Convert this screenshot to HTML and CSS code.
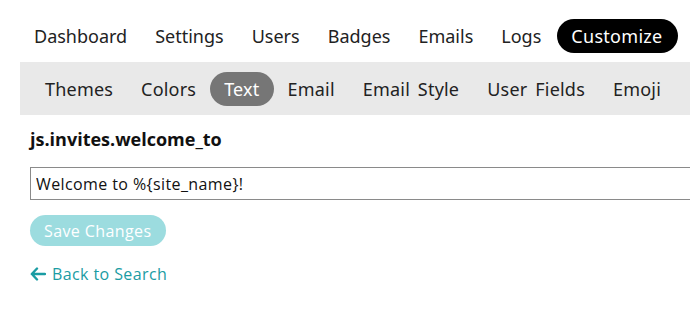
FILE: index.html
```html
<!DOCTYPE html>
<html lang="en">
<head>
    <meta charset="UTF-8">
    <title>Customize - Text</title>
    <link rel="stylesheet" href="styles.css">
</head>
<body>
    <nav class="main-nav">
        <a href="#">Dashboard</a>
        <a href="#">Settings</a>
        <a href="#">Users</a>
        <a href="#">Badges</a>
        <a href="#">Emails</a>
        <a href="#">Logs</a>
        <a href="#" class="active">Customize</a>
    </nav>

    <nav class="sub-nav">
        <a href="#">Themes</a>
        <a href="#">Colors</a>
        <a href="#" class="active">Text</a>
        <a href="#">Email</a>
        <a href="#">Email Style</a>
        <a href="#">User Fields</a>
        <a href="#">Emoji</a>
        <a href="#">Embedding</a>
    </nav>

    <div class="content">
        <h3 class="key-title">js.invites.welcome_to</h3>

        <input type="text" class="text-value" value="Welcome to %{site_name}!">

        <button type="button" class="saveBtn" disabled>Save Changes</button>

        <a href="#" class="back-link">
            <svg width="16" height="14" viewBox="0 0 16 14">
                <path d="M7 1.5 L1.8 7 L7 12.5 M2 7 H15" fill="none" stroke="currentColor" stroke-width="2.4" stroke-linecap="round" stroke-linejoin="round"/>
            </svg>
            Back to Search
        </a>
    </div>
</body>
</html>
```

FILE: styles.css
```css
body {
    margin: 0;
    width: 760px;
    overflow: hidden;
    font-family: "Open Sans", Arial, sans-serif;
    background-color: white;
    color: #222;
}

a {
    text-decoration: none;
}

.main-nav {
    display: flex;
    align-items: center;
    padding: 19px 0 9px 20px;
}

.main-nav a,
.sub-nav a {
    font-family: "Noto Sans", Arial, sans-serif;
    font-size: 18px;
    color: #222;
    line-height: 34px;
    padding: 0 14px;
    border-radius: 17px;
    white-space: nowrap;
}

.main-nav a.active {
    background-color: black;
    color: white;
    margin-left: 2px;
    padding: 0 15px 0 14px;
    letter-spacing: 0.3px;
}

.sub-nav {
    display: flex;
    align-items: center;
    margin-left: 20px;
    padding: 10px 0 9px 11px;
    background-color: #e9e9e9;
}

.sub-nav a {
    letter-spacing: 0.2px;
    word-spacing: 3px;
}

.sub-nav a.active {
    background-color: #767676;
    color: white;
}

.content {
    padding: 0 30px;
    letter-spacing: 0.4px;
}

.key-title {
    font-size: 18px;
    font-weight: bold;
    letter-spacing: 0;
    margin: 12px 0 16px 0;
    color: #111;
}

.text-value {
    display: block;
    box-sizing: border-box;
    width: 700px;
    height: 33px;
    padding: 0 5px;
    border: 1px solid #8a8a8a;
    font-family: "Open Sans", Arial, sans-serif;
    font-size: 16px;
    letter-spacing: 0.4px;
    color: #111;
    margin: 0 0 15px 0;
}

.saveBtn {
    display: block;
    padding: 0 14px;
    height: 31px;
    border: none;
    border-radius: 16px;
    background-color: #9cdcdf;
    color: white;
    font-family: "Open Sans", Arial, sans-serif;
    font-size: 16px;
    letter-spacing: 0.4px;
}

.back-link {
    display: inline-flex;
    align-items: center;
    gap: 6px;
    margin-top: 17px;
    color: #1a9ca3;
    font-size: 16px;
}
```
